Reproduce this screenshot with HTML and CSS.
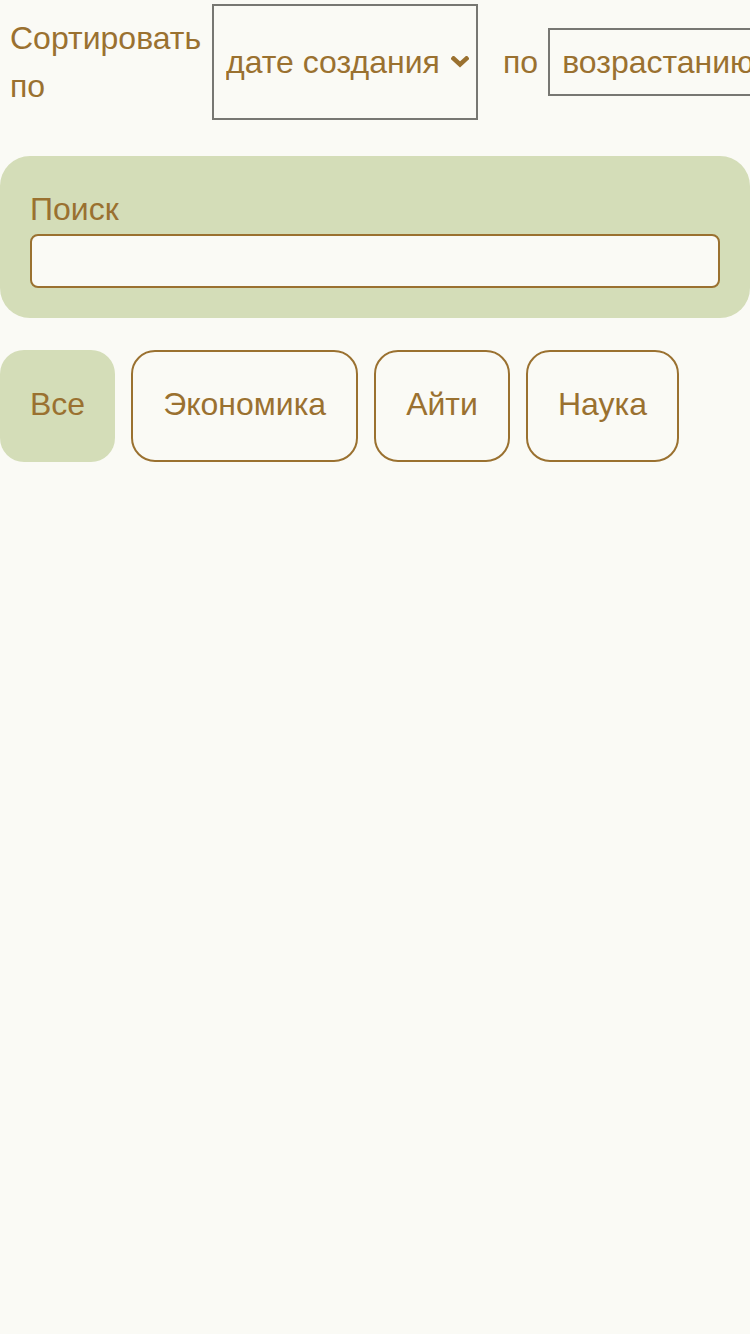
FILE: index.html
```html
<!DOCTYPE html>
<html lang="ru">
<head>
<meta charset="utf-8">
<link rel="stylesheet" href="styles.css">
</head>
<body>
<div class="sort-row">
  <span class="sort-label">Сортировать по</span>
  <div class="select-wrap">
    <select class="sort-select sort-field">
      <option>дате создания</option>
    </select>
    <svg class="chevron" width="18" height="12" viewBox="0 0 18 12" aria-hidden="true">
      <path d="M2.5 2.5 L9 8.5 L15.5 2.5" fill="none" stroke="#9a7130" stroke-width="4.5" stroke-linecap="square" stroke-linejoin="miter"/>
    </svg>
  </div>
  <span class="sort-by">по</span>
  <div class="select-wrap">
    <select class="sort-select sort-order">
      <option>возрастанию</option>
    </select>
  </div>
</div>
<div class="search-panel">
  <label class="search-label" for="q">Поиск</label>
  <input id="q" class="search-input" type="text">
</div>
<div class="tags">
  <button class="tag tag-active">Все</button>
  <button class="tag">Экономика</button>
  <button class="tag">Айти</button>
  <button class="tag">Наука</button>
</div>
</body>
</html>
```
FILE: styles.css
```css
html, body {
  margin: 0;
  padding: 0;
  background: #fafaf5;
  overflow: hidden;
}
body {
  width: 750px;
  height: 1334px;
  font-family: "Liberation Sans", Arial, sans-serif;
  color: #9a7130;
  font-size: 32px;
}
.sort-row {
  display: flex;
  align-items: center;
  padding: 4px 0 0 10px;
  white-space: nowrap;
  overflow: hidden;
}
.sort-label {
  width: 196px;
  white-space: normal;
  line-height: 48px;
  flex-shrink: 0;
  margin-right: 6px;
}
.select-wrap {
  position: relative;
  flex-shrink: 0;
  display: flex;
}
.sort-select {
  -webkit-appearance: none;
  appearance: none;
  font-family: "Liberation Sans", Arial, sans-serif;
  font-size: 32px;
  color: #9a7130;
  background: #fafaf5;
  border: 2px solid #777772;
  border-radius: 0;
  padding: 0 8px 0 12px;
  box-sizing: border-box;
  outline: none;
}
.sort-field {
  width: 266px;
  height: 116px;
}
.chevron {
  position: absolute;
  left: 239px;
  top: 52px;
  pointer-events: none;
}
.sort-by {
  margin: 0 10px 0 25px;
  line-height: 48px;
  flex-shrink: 0;
}
.sort-order {
  width: 260px;
  height: 68px;
}
.search-panel {
  margin-top: 36px;
  background: #d4ddb8;
  border-radius: 30px;
  padding: 30px;
  display: flex;
  flex-direction: column;
}
.search-label {
  line-height: 46px;
  margin-bottom: 2px;
}
.search-input {
  height: 54px;
  box-sizing: border-box;
  border: 2px solid #9a7130;
  border-radius: 8px;
  background: #fafaf5;
  font-size: 32px;
  font-family: "Liberation Sans", Arial, sans-serif;
  color: #9a7130;
  outline: none;
}
.tags {
  display: flex;
  gap: 16px;
  margin-top: 32px;
}
.tag {
  height: 112px;
  box-sizing: border-box;
  padding: 0 30px 3px;
  border: 2px solid #9a7130;
  border-radius: 24px;
  background: transparent;
  font-family: "Liberation Sans", Arial, sans-serif;
  font-size: 32px;
  color: #9a7130;
}
.tag-active {
  background: #d4ddb8;
  border: none;
}
```
